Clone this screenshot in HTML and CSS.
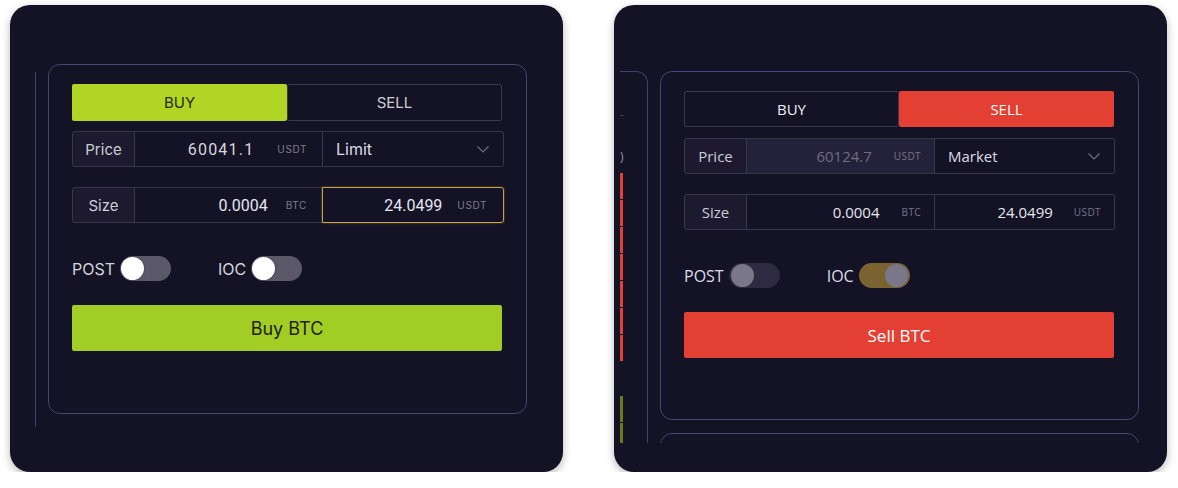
FILE: index.html
```html
<!DOCTYPE html>
<html lang="en">
<head>
<meta charset="utf-8">
<title>Order form</title>
<link rel="stylesheet" href="styles.css">
</head>
<body>
<div class="stage">
  <section class="card card-buy">
    <div class="side side-buy"></div>
    <div class="panel panel-buy">
      <div class="inner">
        <div class="tabs">
          <div class="tab tab-buy-on">BUY</div>
          <div class="tab tab-off">SELL</div>
        </div>
        <div class="row row-first">
          <div class="cell label">Price</div>
          <div class="cell value"><span class="num num-price">60041.1</span><span class="unit gap-24">USDT</span></div>
          <div class="cell select"><span>Limit</span>
            <svg class="chev" width="12" height="7" viewBox="0 0 12 7"><polyline points="0.5,0.5 6,6 11.5,0.5"/></svg>
          </div>
        </div>
        <div class="row row-second">
          <div class="cell label">Size</div>
          <div class="cell value"><span class="num">0.0004</span><span class="unit gap-19">BTC</span></div>
          <div class="cell value value-focus"><span class="num">24.0499</span><span class="unit gap-16">USDT</span></div>
        </div>
        <div class="opts">
          <div class="opt">POST<span class="switch"><span class="knob"></span></span></div>
          <div class="opt">IOC<span class="switch"><span class="knob"></span></span></div>
        </div>
        <div class="btn btn-buy">Buy BTC</div>
      </div>
    </div>
  </section>

  <section class="card card-sell">
    <div class="viewport">
      <div class="side side-sell">
        <div class="ob-line ob-dash">-</div>
        <div class="ob-line ob-head">)</div>
        <div class="bars">
          <div class="bar bar-ask"></div>
          <div class="bar bar-ask"></div>
          <div class="bar bar-ask"></div>
          <div class="bar bar-ask"></div>
          <div class="bar bar-ask"></div>
          <div class="bar bar-ask"></div>
          <div class="bar bar-ask"></div>
        </div>
        <div class="bars bars-bid">
          <div class="bar bar-bid"></div>
          <div class="bar bar-bid"></div>
        </div>
      </div>
      <div class="main-col">
        <div class="panel panel-sell">
          <div class="inner">
            <div class="tabs tabs-sell">
              <div class="tab tab-off tab-off-light">BUY</div>
              <div class="tab tab-sell-on">SELL</div>
            </div>
            <div class="row row-sell row-first-sell">
              <div class="cell label">Price</div>
              <div class="cell value value-disabled"><span class="num">60124.7</span><span class="unit gap-23">USDT</span></div>
              <div class="cell select"><span>Market</span>
                <svg class="chev" width="12" height="7" viewBox="0 0 12 7"><polyline points="0.5,0.5 6,6 11.5,0.5"/></svg>
              </div>
            </div>
            <div class="row row-sell row-second">
              <div class="cell label">Size</div>
              <div class="cell value"><span class="num">0.0004</span><span class="unit gap-23">BTC</span></div>
              <div class="cell value"><span class="num">24.0499</span><span class="unit gap-22">USDT</span></div>
            </div>
            <div class="opts">
              <div class="opt">POST<span class="switch switch-dim"><span class="knob knob-dim"></span></span></div>
              <div class="opt">IOC<span class="switch switch-gold"><span class="knob knob-dim"></span></span></div>
            </div>
            <div class="btn btn-sell">Sell BTC</div>
          </div>
        </div>
        <div class="panel panel-next"></div>
      </div>
    </div>
  </section>
</div>
</body>
</html>
```

FILE: styles.css
```css
* { box-sizing: border-box; }

html, body {
  margin: 0;
  padding: 0;
  background: #ffffff;
}

.stage {
  display: flex;
  gap: 51px;
  padding: 5px 0 0 10px;
}

.card {
  width: 553px;
  height: 467px;
  flex: none;
  border-radius: 20px;
  background: #141225;
  box-shadow: 0 3px 9px rgba(0, 0, 0, 0.28);
  overflow: hidden;
  display: flex;
  align-items: flex-start;
}

.card-buy {
  padding-top: 59px;
  font-family: Inter, "Liberation Sans", sans-serif;
}

.card-sell {
  padding: 66px 0 0 6px;
  font-family: "Open Sans", "Noto Sans", sans-serif;
}

/* side slivers */
.side-buy {
  width: 26px;
  height: 355px;
  margin-top: 8px;
  flex: none;
  border-right: 1px solid #463e6c;
}

.viewport {
  display: flex;
  align-items: flex-start;
  width: 100%;
  height: 372px;
  overflow: hidden;
}

.side-sell {
  width: 28px;
  height: 420px;
  flex: none;
  border-top: 1px solid #463e6c;
  border-right: 1px solid #463e6c;
  border-top-right-radius: 12px;
}

.ob-line {
  width: 8px;
  white-space: nowrap;
  font-size: 12px;
  line-height: 14px;
}

.ob-dash {
  margin-top: 36px;
  color: #4f4d62;
}

.ob-head {
  margin-top: 28px;
  color: #9a98aa;
}

.bars {
  margin-top: 9px;
  display: flex;
  flex-direction: column;
  gap: 1px;
}

.bars-bid {
  margin-top: 35px;
}

.bar {
  width: 3px;
  height: 26px;
}

.bar-ask { background: #e43f33; }
.bar-bid { background: #6c7a16; }

.main-col {
  margin-left: 12px;
  display: flex;
  flex-direction: column;
  gap: 13px;
  flex: none;
}

/* panels */
.panel {
  width: 479px;
  flex: none;
  border: 1px solid #4b4373;
  border-radius: 12px;
  padding: 19px 0 0 23px;
}

.panel-buy {
  height: 350px;
  margin-left: 12px;
}

.panel-sell { height: 349px; }
.panel-next { height: 100px; }

.inner {
  width: 430px;
  display: flex;
  flex-direction: column;
}

/* tabs */
.tabs {
  display: grid;
  grid-template-columns: 1fr 1fr;
  height: 37px;
}

.tabs-sell { height: 36px; }

.tab {
  display: flex;
  align-items: center;
  justify-content: center;
  font-size: 15px;
  border-radius: 2px;
}

.tab-off {
  border: 1px solid #3c3a4a;
  color: #cfcfd7;
}

.tab-off-light { color: #eeeef4; }

.tab-buy-on {
  background: #b1d525;
  color: #262c10;
}

.tab-sell-on {
  background: #e43f33;
  color: #ffffff;
}

/* rows */
.row {
  display: grid;
  grid-template-columns: 63px 188px 181px;
  height: 36px;
}

.row-sell {
  grid-template-columns: 63px 188px 180px;
}

.row-first { margin-top: 10px; }
.row-first-sell { margin-top: 11px; }
.row-second { margin-top: 20px; }

.cell {
  border: 1px solid #3a3848;
  display: flex;
  align-items: center;
  min-width: 0;
}

.cell + .cell { margin-left: -1px; }

.cell:first-child { border-radius: 3px 0 0 3px; }
.cell:last-child { border-radius: 0 3px 3px 0; }

.label {
  justify-content: center;
  background: #1d1a2f;
  font-size: 15px;
  color: #cdcdd6;
}

.value {
  justify-content: flex-end;
  padding-right: 15px;
  font-size: 16px;
  color: #e6e6ef;
}

.card-buy .num {
  font-family: Roboto, Inter, sans-serif;
}

.card-buy .num-price {
  letter-spacing: 1.2px;
  color: #d6d6de;
}

.card-sell .value {
  padding-right: 13px;
  font-size: 15px;
}

.value-disabled {
  background: #24213a;
  color: #6f6d80;
}

.value-disabled .unit { color: #4f4d60; }

.value-focus {
  position: relative;
  z-index: 1;
  border-color: #c9a443;
  box-shadow: 0 0 2px rgba(201, 164, 67, 0.6);
  border-radius: 2px;
  padding-right: 16px;
}

.unit {
  font-size: 10px;
  letter-spacing: 0.6px;
  color: #7f7d8f;
}

.card-sell .unit {
  letter-spacing: 0.4px;
  color: #767487;
}

.gap-24 { margin-left: 23px; }
.gap-23 { margin-left: 22px; }
.gap-22 { margin-left: 21px; }
.gap-19 { margin-left: 18px; }
.gap-16 { margin-left: 15px; }

.select {
  justify-content: space-between;
  padding: 0 14px 0 13px;
  font-size: 16px;
  color: #dcdce4;
}

.card-sell .select { font-size: 15px; }

.chev polyline {
  fill: none;
  stroke: #6e6c80;
  stroke-width: 1.2;
}

/* options */
.opts {
  display: flex;
  align-items: center;
  height: 25px;
  margin-top: 33px;
}

.opt {
  display: flex;
  align-items: center;
  gap: 5px;
  font-size: 16px;
  color: #d2d2da;
}

.card-sell .opt { color: #dcdce4; }

.opt + .opt { margin-left: 47px; }

.switch {
  width: 51px;
  height: 25px;
  border-radius: 13px;
  background: #5b5869;
  display: flex;
  align-items: center;
  padding: 0 1px;
}

.knob {
  width: 23px;
  height: 23px;
  border-radius: 50%;
  background: #ffffff;
  box-shadow: 0 0 2px rgba(0, 0, 0, 0.45);
}

.switch-dim { background: #2e2b40; }

.switch-gold {
  background: #7a6231;
  justify-content: flex-end;
}

.knob-dim {
  background: #7a7789;
  box-shadow: none;
}

.switch-dim .knob-dim { margin-left: 1px; }
.switch-gold .knob-dim { margin-right: 1px; }

/* buttons */
.btn {
  margin-top: 24px;
  height: 46px;
  border-radius: 2px;
  display: flex;
  align-items: center;
  justify-content: center;
}

.btn-buy {
  background: #a1cd24;
  color: #1d2210;
  font-size: 18px;
}

.btn-sell {
  background: #e43f33;
  color: #ffffff;
  font-size: 17px;
}
```
